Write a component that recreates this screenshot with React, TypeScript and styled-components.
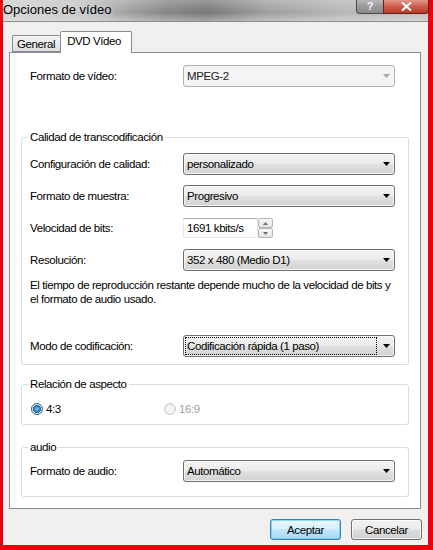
import styled, { createGlobalStyle } from "styled-components";

const GlobalStyle = createGlobalStyle`
  html, body {
    margin: 0;
    padding: 0;
    background: #e8000c;
  }
  body {
    font-family: "Liberation Sans", Arial, sans-serif;
    font-size: 11.5px;
    letter-spacing: -0.4px;
    color: #000;
  }
`;

function Arrow({ muted }: { muted?: boolean }) {
  return (
    <svg width="7" height="4" viewBox="0 0 7 4">
      <polygon points="0,0 7,0 3.5,4" fill={muted ? "#a8a8a8" : "#000"} />
    </svg>
  );
}

function Combo({
  value,
  disabled,
  focused,
}: {
  value: string;
  disabled?: boolean;
  focused?: boolean;
}) {
  return (
    <ComboBox $disabled={disabled}>
      <ComboText $focused={focused}>{value}</ComboText>
      <Arrow muted={disabled} />
    </ComboBox>
  );
}

export default function App(): JSX.Element {
  return (
    <Frame>
      <GlobalStyle />
      <Window>
        <TitleBar>
          <Title>Opciones de vídeo</Title>
          <Caption>
            <HelpBtn>?</HelpBtn>
            <CloseBtn>
              <svg width="11" height="9" viewBox="0 0 11 9">
                <path
                  d="M1 0.5 L10 8.5 M10 0.5 L1 8.5"
                  stroke="#fff"
                  strokeWidth="2.2"
                />
              </svg>
            </CloseBtn>
          </Caption>
        </TitleBar>

        <Client>
          <TabStrip>
            <Tab>General</Tab>
            <Tab $active>DVD Vídeo</Tab>
          </TabStrip>

          <Panel>
            <TopRow>
              <span>Formato de vídeo:</span>
              <Combo value="MPEG-2" disabled />
            </TopRow>

            <Group $mt={43} $pt={9} $pb={7}>
              <Legend>Calidad de transcodificación</Legend>
              <Row>
                <span>Configuración de calidad:</span>
                <Combo value="personalizado" />
              </Row>
              <Row $mt={10}>
                <span>Formato de muestra:</span>
                <Combo value="Progresivo" />
              </Row>
              <Row $mt={10}>
                <span>Velocidad de bits:</span>
                <Spin>
                  <SpinInput>1691 kbits/s</SpinInput>
                  <SpinButtons>
                    <SpinHalf>
                      <svg width="5" height="3" viewBox="0 0 5 3">
                        <polygon points="0,3 5,3 2.5,0" fill="#6d6d6d" />
                      </svg>
                    </SpinHalf>
                    <SpinHalf>
                      <svg width="5" height="3" viewBox="0 0 5 3">
                        <polygon points="0,0 5,0 2.5,3" fill="#6d6d6d" />
                      </svg>
                    </SpinHalf>
                  </SpinButtons>
                </Spin>
              </Row>
              <Row $mt={10}>
                <span>Resolución:</span>
                <Combo value="352 x 480 (Medio D1)" />
              </Row>
              <Note>
                El tiempo de reproducción restante depende mucho de la velocidad de bits y
                <br />
                el formato de audio usado.
              </Note>
              <Row $mt={29}>
                <span>Modo de codificación:</span>
                <Combo value="Codificación rápida (1 paso)" focused />
              </Row>
            </Group>

            <Group $mt={12} $pt={11} $pb={8}>
              <Legend>Relación de aspecto</Legend>
              <RadioRow>
                <RadioLabel>
                  <Radio $checked />
                  4:3
                </RadioLabel>
                <RadioLabel $disabled>
                  <Radio $disabled />
                  16:9
                </RadioLabel>
              </RadioRow>
            </Group>

            <Group $mt={15} $pt={6} $pb={14}>
              <Legend>audio</Legend>
              <Row>
                <span>Formato de audio:</span>
                <Combo value="Automático" />
              </Row>
            </Group>
          </Panel>

          <ButtonBar>
            <DialogButton $default>Aceptar</DialogButton>
            <DialogButton>Cancelar</DialogButton>
          </ButtonBar>
        </Client>
      </Window>
    </Frame>
  );
}

const Frame = styled.div`
  width: 433px;
  height: 550px;
  box-sizing: border-box;
  padding: 0 5px 5px 3px;
  background: #e8000c;
`;

const Window = styled.div`
  height: 545px;
  display: flex;
  flex-direction: column;
  background: #f0f0f0;
`;

const TitleBar = styled.div`
  height: 22px;
  display: flex;
  justify-content: space-between;
  align-items: flex-start;
  background: linear-gradient(
      180deg,
      rgba(255, 255, 255, 0.25) 0%,
      rgba(255, 255, 255, 0) 60%,
      rgba(255, 255, 255, 0.35) 100%
    ),
    linear-gradient(
      90deg,
      #cdcdcd 0%,
      #c2c2c2 18%,
      #868686 38%,
      #777777 48%,
      #9e9e9e 62%,
      #b6b6b6 80%,
      #bfbfbf 100%
    );
  border-bottom: 1px solid #8c8c8c;
  box-sizing: border-box;
`;

const Title = styled.div`
  font-size: 13px;
  letter-spacing: 0;
  line-height: 16px;
  padding: 2px 0 0 0;
  color: #000;
  text-shadow: 0 0 6px rgba(255, 255, 255, 0.9);
`;

const Caption = styled.div`
  display: flex;
  margin-right: -1px;
`;

const HelpBtn = styled.div`
  width: 27px;
  height: 14px;
  box-sizing: border-box;
  border: 1px solid #4a4a4a;
  border-top: none;
  border-right: none;
  border-radius: 0 0 0 4px;
  background: linear-gradient(180deg, #b9b9b9 0%, #9a9a9a 50%, #8a8a8a 100%);
  color: #f4f4f4;
  font-weight: bold;
  font-size: 11px;
  line-height: 12px;
  text-align: center;
`;

const CloseBtn = styled.div`
  width: 46px;
  height: 14px;
  box-sizing: border-box;
  border: 1px solid #5e2218;
  border-top: none;
  border-radius: 0 0 4px 0;
  background: linear-gradient(180deg, #e2978a 0%, #cf5c4b 50%, #b93a26 100%);
  display: flex;
  align-items: center;
  justify-content: center;
`;

const Client = styled.div`
  flex: 1;
  display: flex;
  flex-direction: column;
  padding: 10px 6px 0 6px;
`;

const TabStrip = styled.div`
  display: flex;
  align-items: flex-end;
  height: 21px;
  padding-left: 3px;
  margin-bottom: -1px;
  position: relative;
  z-index: 1;
`;

const Tab = styled.div<{ $active?: boolean }>`
  box-sizing: border-box;
  height: ${(p) => (p.$active ? "22px" : "17px")};
  margin-bottom: ${(p) => (p.$active ? "0" : "1px")};
  padding: ${(p) => (p.$active ? "2px 10px 0 6px" : "1px 5px 0 4px")};
  border: 1px solid #898c95;
  border-bottom: ${(p) => (p.$active ? "none" : "1px solid #898c95")};
  border-right: ${(p) => (p.$active ? "1px solid #898c95" : "none")};
  border-radius: 2px 2px 0 0;
  background: ${(p) =>
    p.$active
      ? "#fff"
      : "linear-gradient(180deg, #f3f3f3 0%, #ebebeb 50%, #dedede 100%)"};
  line-height: 14px;
`;

const Panel = styled.div`
  background: #fff;
  border: 1px solid #898c95;
  margin-right: 1px;
  padding: 12px 11px 11px 11px;
  display: flex;
  flex-direction: column;
`;

const Row = styled.div<{ $mt?: number }>`
  display: grid;
  grid-template-columns: 153px 212px;
  align-items: center;
  height: 22px;
  margin-top: ${(p) => p.$mt ?? 0}px;
`;

const TopRow = styled(Row)`
  padding-left: 9px;
`;

const Group = styled.fieldset<{ $mt: number; $pt: number; $pb: number }>`
  margin: ${(p) => p.$mt}px 0 0 0;
  padding: ${(p) => p.$pt}px 8px ${(p) => p.$pb}px 8px;
  border: 1px solid #d5dfe5;
  border-radius: 3px;
  min-width: 0;
`;

const Legend = styled.legend`
  padding: 0 2px;
  margin-left: -2px;
  line-height: 14px;
`;

const ComboBox = styled.div<{ $disabled?: boolean }>`
  height: 22px;
  box-sizing: border-box;
  display: flex;
  align-items: center;
  justify-content: space-between;
  padding: 0 4px 0 2px;
  border: 1px solid ${(p) => (p.$disabled ? "#adb2b5" : "#707070")};
  border-radius: 3px;
  background: ${(p) =>
    p.$disabled
      ? "#f4f4f4"
      : "linear-gradient(180deg, #f4f4f4 0%, #ececec 45%, #dfdfdf 55%, #d3d3d3 100%)"};
  color: ${(p) => (p.$disabled ? "#222" : "#000")};
  box-shadow: ${(p) =>
    p.$disabled ? "none" : "inset 0 0 0 1px rgba(255, 255, 255, 0.7)"};
`;

const ComboText = styled.span<{ $focused?: boolean }>`
  flex: ${(p) => (p.$focused ? "0 0 190px" : "0 1 auto")};
  box-sizing: border-box;
  padding: 1px 1px;
  line-height: 14px;
  outline: ${(p) => (p.$focused ? "1px dotted #000" : "none")};
`;

const Spin = styled.div`
  display: flex;
  height: 20px;
  width: 90px;
`;

const SpinInput = styled.div`
  width: 75px;
  box-sizing: border-box;
  border: 1px solid #e3e9ef;
  border-top-color: #abadb3;
  background: #fff;
  padding: 0 3px;
  line-height: 18px;
`;

const SpinButtons = styled.div`
  width: 15px;
  display: flex;
  flex-direction: column;
`;

const SpinHalf = styled.div`
  flex: 1;
  box-sizing: border-box;
  border: 1px solid #b6b6b6;
  border-radius: 2px;
  background: linear-gradient(180deg, #f7f7f7 0%, #e4e4e4 100%);
  display: flex;
  align-items: center;
  justify-content: center;
`;

const Note = styled.div`
  margin-top: 8px;
  line-height: 13.5px;
  white-space: nowrap;
`;

const RadioRow = styled.div`
  display: grid;
  grid-template-columns: 133px auto;
  align-items: center;
  height: 14px;
`;

const RadioLabel = styled.label<{ $disabled?: boolean }>`
  display: flex;
  align-items: center;
  gap: 3px;
  color: ${(p) => (p.$disabled ? "#a0a0a0" : "#000")};
`;

const Radio = styled.span<{ $checked?: boolean; $disabled?: boolean }>`
  width: 12px;
  height: 12px;
  box-sizing: border-box;
  border-radius: 50%;
  border: 1px solid ${(p) => (p.$disabled ? "#c8c8c8" : "#2c628b")};
  background: ${(p) =>
    p.$checked
      ? "radial-gradient(circle, #7fc4f1 0%, #1f77b7 45%, #2a5f8a 55%, #f1f1f1 60%, #e0e0e0 100%)"
      : p.$disabled
      ? "radial-gradient(circle, #f7f7f7 0%, #ececec 100%)"
      : "#f2f2f2"};
  margin-left: 1px;
`;

const ButtonBar = styled.div`
  display: flex;
  justify-content: flex-end;
  gap: 10px;
  margin-top: 10px;
`;

const DialogButton = styled.div<{ $default?: boolean }>`
  width: 71px;
  height: 21px;
  box-sizing: border-box;
  display: flex;
  align-items: center;
  justify-content: center;
  border: 1px solid ${(p) => (p.$default ? "#3c7fb1" : "#707070")};
  border-radius: 3px;
  background: ${(p) =>
    p.$default
      ? "linear-gradient(180deg, #eaf6fd 0%, #d9f0fc 45%, #bee6fd 55%, #a7d9f5 100%)"
      : "linear-gradient(180deg, #f2f2f2 0%, #ebebeb 45%, #dddddd 55%, #cfcfcf 100%)"};
  box-shadow: inset 0 0 0 1px
    ${(p) => (p.$default ? "rgba(72, 200, 240, 0.6)" : "rgba(255, 255, 255, 0.7)")};
`;
